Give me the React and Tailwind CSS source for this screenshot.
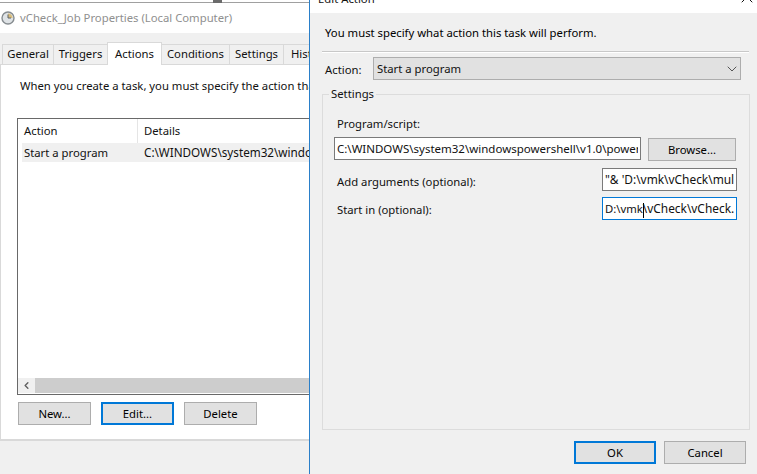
import { ChevronDown, ChevronLeft, X } from "lucide-react";

const Btn = ({ children, focused, className = "" }) => (
  <div
    className={`h-[23px] pt-[1px] flex items-center justify-center bg-[#e1e1e1] text-black ${
      focused ? "border-2 border-[#0078d7]" : "border border-[#adadad]"
    } ${className}`}
  >
    {children}
  </div>
);

const Tab = ({ label, active, className = "" }) => (
  <div
    className={`-ml-px shrink-0 flex items-center justify-center border border-b-0 border-[#d9d9d9] ${
      active ? "h-[23px] bg-white relative z-10" : "h-[20px] mt-[2px] bg-[#f0f0f0]"
    } ${className}`}
  >
    {label}
  </div>
);

const Field = ({ children, className = "" }) => (
  <div className={`h-[23px] pt-[1px] flex items-center bg-white px-[2px] ${className}`}>
    <div className="flex-1 overflow-hidden whitespace-nowrap">{children}</div>
  </div>
);

const TaskWindow = () => (
  <div className="w-[309px] shrink-0 flex flex-col overflow-hidden">
    <div className="h-[3px] shrink-0 flex bg-white border-b border-[#a0a0a0]">
      <div className="ml-[213px] w-[9px] h-[3px] bg-[#6b6b6b]" />
    </div>
    <div className="h-[30px] shrink-0 bg-white flex items-center gap-[5px] pl-[1px] text-[#8f8f8f]">
      <svg width="14" height="14" viewBox="0 0 14 14" className="shrink-0">
        <circle cx="7" cy="7" r="6" fill="#dfe3e6" stroke="#868c90" strokeWidth="1.4" />
        <path d="M7 7V2.4A4.6 4.6 0 0 1 11.6 7Z" fill="#d9bd7c" />
        <path d="M7 3.5V7H10" fill="none" stroke="#5f6468" strokeWidth="1" />
      </svg>
      <span className="whitespace-nowrap">vCheck_Job Properties (Local Computer)</span>
    </div>
    <div className="flex-1 bg-[#f0f0f0] flex flex-col">
      <div className="h-[9px] shrink-0" />
      <div className="h-[22px] shrink-0 flex items-start pl-[3px] whitespace-nowrap relative z-10">
        <Tab label="General" className="w-[52px]" />
        <Tab label="Triggers" className="w-[55px]" />
        <Tab label="Actions" className="w-[55px]" active />
        <Tab label="Conditions" className="w-[69px]" />
        <Tab label="Settings" className="w-[55px]" />
        <Tab label="History" className="w-[54px]" />
      </div>
      <div className="h-[377px] shrink-0 bg-white border-t border-b-2 border-l border-[#d9d9d9] pl-[16px] flex flex-col">
        <div className="h-[39px] pt-[13px] pl-[3px] whitespace-nowrap leading-[16px]">
          When you create a task, you must specify the action that will occur
        </div>
        <div className="h-[14px] shrink-0" />
        <div className="h-[277px] shrink-0 border border-r-0 border-[#696969] flex flex-col">
          <div className="h-[24px] shrink-0 flex whitespace-nowrap">
            <div className="w-[120px] shrink-0 pl-[6px] pt-[1px] flex items-center border-r border-[#e5e5e5]">Action</div>
            <div className="pl-[6px] pt-[1px] flex items-center">Details</div>
          </div>
          <div className="h-[19px] shrink-0 ml-[4px] pt-[1px] flex items-center bg-[#f0f0f0] whitespace-nowrap">
            <div className="w-[116px] shrink-0 pl-[2px]">Start a program</div>
            <div className="pl-[6px] text-[11.7px]">C:\WINDOWS\system32\windowspowershell</div>
          </div>
          <div className="flex-1" />
          <div className="h-[15px] shrink-0 mb-[1px] flex bg-[#cdcdcd]">
            <div className="w-[17px] bg-[#f0f0f0] flex items-center justify-center">
              <ChevronLeft size={11} strokeWidth={3} className="text-[#606060]" />
            </div>
          </div>
        </div>
        <div className="flex gap-[10px] mt-[7px] ml-[1px]">
          <Btn className="w-[73px]">New...</Btn>
          <Btn className="w-[73px]" focused>Edit...</Btn>
          <Btn className="w-[73px]">Delete</Btn>
        </div>
      </div>
    </div>
  </div>
);

const EditDialog = () => (
  <div className="flex-1 border-l border-[#2a7fc9] flex flex-col overflow-hidden">
    <div className="h-[13px] shrink-0 bg-white flex items-end justify-between overflow-hidden pl-[8px]">
      <span className="leading-[16px] mb-[6px]">Edit Action</span>
      <X size={20} strokeWidth={1.2} className="mb-[6px]" />
    </div>
    <div className="flex-1 bg-[#f0f0f0] flex flex-col pl-[12px] pr-[7px]">
      <div className="h-[38px] pt-[12px] pl-[3px] leading-[16px] whitespace-nowrap text-black">
        You must specify what action this task will perform.
      </div>
      <div className="h-[2px] w-[427px] bg-[#c8c8c8] border-b border-white" />
      <div className="h-[23px] mt-[4px] flex items-center">
        <div className="w-[51px] pl-[3px] pt-[4px]">Action:</div>
        <div className="w-[368px] h-[23px] pt-[1px] flex items-center justify-between bg-[#e1e1e1] border border-[#adadad] pl-[3px]">
          <span>Start a program</span>
          <ChevronDown size={16} strokeWidth={1.5} className="text-[#555]" />
        </div>
      </div>
      <div className="relative mt-[14px] w-[428px] h-[336px] border border-[#dcdcdc] pl-[11px] flex flex-col">
        <span className="absolute -top-[9px] left-[6px] px-[2px] bg-[#f0f0f0] leading-[16px]">Settings</span>
        <div className="h-[42px] pt-[21px] pl-[3px] leading-[16px]">Program/script:</div>
        <div className="flex gap-[7px]">
          <Field className="w-[307px] border border-[#7a7a7a] text-[11.5px]">C:\WINDOWS\system32\windowspowershell\v1.0\powershell.exe</Field>
          <Btn className="w-[88px] mt-[1px]">Browse...</Btn>
        </div>
        <div className="flex items-center mt-[7px]">
          <div className="w-[268px] pl-[3px] pt-[5px]">Add arguments (optional):</div>
          <Field className="w-[135px] border border-[#7a7a7a] text-[11.9px]">"&amp; 'D:\vmk\vCheck\multi.ps1'</Field>
        </div>
        <div className="flex items-center mt-[6px]">
          <div className="w-[268px] pl-[3px] pt-[4px]">Start in (optional):</div>
          <Field className="w-[135px] border border-[#0078d7]">
            D:\vmk<span className="inline-block w-px h-[15px] align-middle bg-black -mr-px" />
            <span className="text-[11.9px]">\vCheck\vCheck.ps1</span>
          </Field>
        </div>
      </div>
      <div className="flex justify-end gap-[8px] mt-[11px] pr-[4px]">
        <Btn className="w-[82px]" focused>OK</Btn>
        <Btn className="w-[82px]">Cancel</Btn>
      </div>
    </div>
  </div>
);

export default function App() {
  return (
    <div className="w-[757px] h-[474px] flex overflow-hidden bg-white text-[11.3px] text-[#111] font-['Noto_Sans',sans-serif]">
      <TaskWindow />
      <EditDialog />
    </div>
  );
}
